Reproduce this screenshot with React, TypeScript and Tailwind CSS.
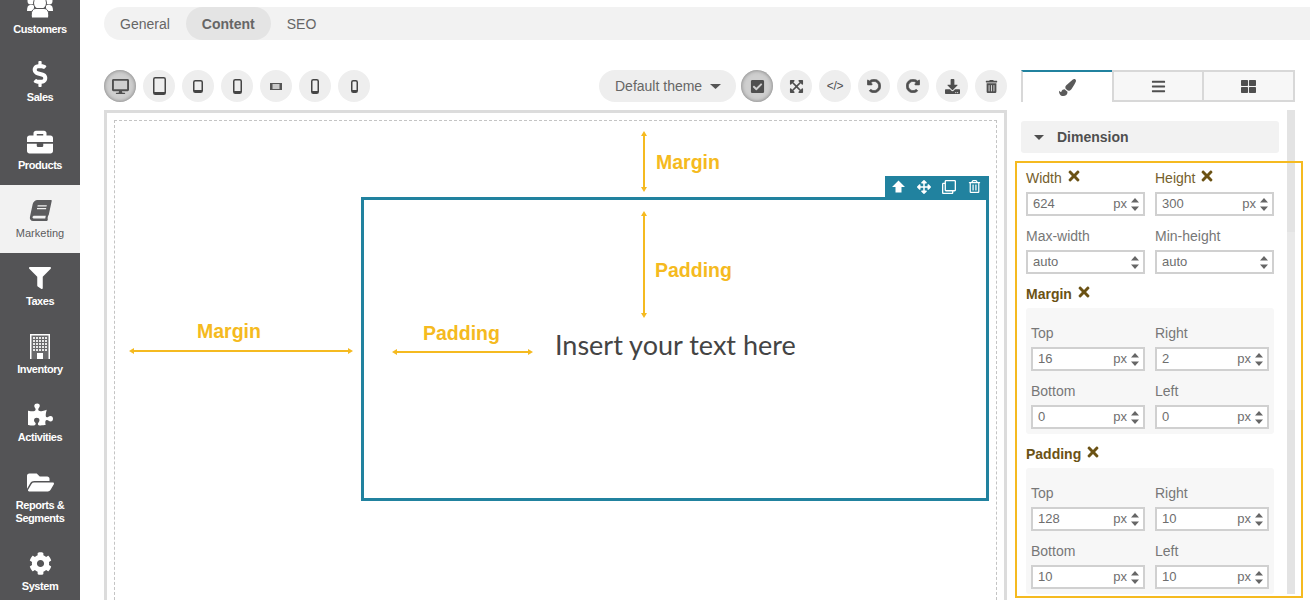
import type { ReactNode } from "react";
import {
    FaArrowsAlt,
    FaBars,
    FaBook,
    FaBriefcase,
    FaCheckSquare,
    FaCog,
    FaDesktop,
    FaDollarSign,
    FaDownload,
    FaExpandArrowsAlt,
    FaFilter,
    FaFolderOpen,
    FaPaintBrush,
    FaPuzzlePiece,
    FaRedoAlt,
    FaRegClone,
    FaRegTrashAlt,
    FaThLarge,
    FaTimes,
    FaTrashAlt,
    FaUndoAlt,
} from "react-icons/fa";

const UsersIcon = () => (
    <svg width="26" height="28" viewBox="0 0 26 28" fill="currentColor">
        <circle cx="4" cy="9" r="3.5" />
        <circle cx="22" cy="9" r="3.5" />
        <path d="M0 19c0-4 1-6 3-6h4v6zM26 19c0-4-1-6-3-6h-4v6z" />
        <circle cx="13" cy="11" r="6.5" stroke="#545456" strokeWidth="1" />
        <path d="M4.500 26c-1-6 1-9.500 4.500-9.500h8c3.500 0 5.500 3.500 4.500 9.500z" stroke="#545456" strokeWidth="1" />
    </svg>
);

const BuildingIcon = () => (
    <svg width="20" height="25" viewBox="0 0 20 25">
        <rect x="0" y="0" width="20" height="25" fill="#ffffff" />
        <rect x="1.500" y="1.500" width="17" height="23.500" fill="#6a6a6c" />
        {[3, 6, 9, 12, 15].map((x) =>
            [3, 6, 9, 12, 15].map((y) => (
                <rect key={`${x}-${y}`} x={x} y={y} width="2" height="2" fill="#e8e8e8" />
            )),
        )}
        <rect x="7" y="19" width="6" height="6" fill="#ffffff" />
    </svg>
);

const navItems = [
    { label: "Customers", icon: <UsersIcon /> },
    { label: "Sales", icon: <FaDollarSign size={26} /> },
    { label: "Products", icon: <FaBriefcase size={26} /> },
    { label: "Marketing", icon: <FaBook size={21} className="-skew-x-12" />, active: true },
    { label: "Taxes", icon: <FaFilter size={22} /> },
    { label: "Inventory", icon: <BuildingIcon /> },
    { label: "Activities", icon: <FaPuzzlePiece size={25} /> },
    { label: "Reports &\nSegments", icon: <FaFolderOpen size={27} /> },
    { label: "System", icon: <FaCog size={23} /> },
];

const Sidebar = () => (
    <aside className="w-20 shrink-0 bg-[#545456] -mt-[19px]">
        {navItems.map((item) => (
            <div
                key={item.label}
                className={`flex flex-col items-center pt-[11px] ${item.label.includes("\n") ? "h-[81px]" : "h-[68px]"} ${item.active ? "bg-[#f2f2f2] text-[#5c5c5e]" : "text-white"}`}
            >
                <div className="h-[28px] flex items-center justify-center">{item.icon}</div>
                <div className={`mt-[3px] text-[11px] leading-[13px] text-center whitespace-pre-line ${item.active ? "font-normal" : "font-bold tracking-[-0.45px]"}`}>
                    {item.label}
                </div>
            </div>
        ))}
    </aside>
);

const RoundBtn = ({ children, pressed }: { children: ReactNode; pressed?: boolean }) => (
    <div
        className={`w-8 h-8 rounded-full flex items-center justify-center text-[#4f4f4f] ${pressed ? "bg-[#cfcfcf] shadow-[inset_0_0_4px_#777]" : "bg-[#eeeeee]"}`}
    >
        {children}
    </div>
);

// tablet / phone outline, bottom bar is the home button
const Device = ({ w, h, landscape }: { w: number; h: number; landscape?: boolean }) => (
    <svg width={w} height={h} viewBox={`0 0 ${w} ${h}`} fill="none">
        {landscape ? (
            <>
                <rect x="0.500" y="0.500" width={w - 1} height={h - 1} fill="#c8c8c8" stroke="#555555" strokeWidth="1" />
                <rect x="1" y="1" width="1.500" height={h - 2} fill="#555555" />
                <rect x={w - 2.500} y="1" width="1.500" height={h - 2} fill="#555555" />
            </>
        ) : (
            <>
                <rect x="0.750" y="0.750" width={w - 1.500} height={h - 1.500} rx="1.500" stroke="#454545" strokeWidth="1.500" />
                <rect x="1" y={h - 3} width={w - 2} height="2" fill="#454545" />
            </>
        )}
    </svg>
);

const Caret = ({ w = 11, h = 5, className }: { w?: number; h?: number; className?: string }) => (
    <svg width={w} height={h} viewBox={`0 0 ${w} ${h}`} className={className} fill="currentColor">
        <path d={`M0 0H${w}L${w / 2} ${h}Z`} />
    </svg>
);

const SortIcon = () => (
    <svg width="8" height="13" viewBox="0 0 8 13" fill="#666666" className="shrink-0">
        <path d="M4 0L8 4.500H0Z M4 13L8 8.500H0Z" />
    </svg>
);

const UpIcon = () => (
    <svg width="13" height="13" viewBox="0 0 13 13" fill="currentColor">
        <path d="M6.500 0.500L13 7H9.500V12.500H3.500V7H0Z" />
    </svg>
);

const Arrow = ({ x, y, len, vertical }: { x: number; y: number; len: number; vertical?: boolean }) => (
    <svg
        className="absolute"
        style={vertical ? { left: x - 4, top: y, width: 8, height: len } : { left: x, top: y - 4, width: len, height: 8 }}
        viewBox={vertical ? `0 0 8 ${len}` : `0 0 ${len} 8`}
    >
        {vertical ? (
            <>
                <rect x="3" y="3" width="2" height={len - 6} fill="#f5ba20" />
                <path d={`M4 0L7 5H1Z M4 ${len}L7 ${len - 5}H1Z`} fill="#f5ba20" />
            </>
        ) : (
            <>
                <rect x="3" y="3" width={len - 6} height="2" fill="#f5ba20" />
                <path d={`M0 4L5 1V7Z M${len} 4L${len - 5} 1V7Z`} fill="#f5ba20" />
            </>
        )}
    </svg>
);

const Note = ({ x, y, children }: { x: number; y: number; children: ReactNode }) => (
    <div className="absolute text-[19.5px] leading-6 font-bold text-[#f5ba20]" style={{ left: x, top: y }}>
        {children}
    </div>
);

const Canvas = () => (
    <div className="relative flex-1 border-[3px] border-b-0 border-[#dcdcdc] pt-[7px] px-[7px] overflow-hidden">
        <div className="h-full border border-b-0 border-dashed border-[#c4c4c4] flex justify-end pr-[7px]">
            <div className="mt-[55px] w-[628px] h-[325px] flex flex-col items-end">
                <div className="w-[104px] h-[21px] bg-[#21829f] text-white flex items-center justify-between pl-[7px] pr-[8px] shrink-0">
                    <UpIcon />
                    <FaArrowsAlt size={14} />
                    <FaRegClone size={14} />
                    <FaRegTrashAlt size={13} />
                </div>
                <div className="w-full h-[304px] border-[3px] border-[#21829f] pl-[191px] pt-[127px]">
                    <div className="font-['Lato',sans-serif] text-[27px] leading-[36px] text-[#444444]">
                        Insert your text here
                    </div>
                </div>
            </div>
        </div>
        {/* annotations, offsets are from the frame's inner corner */}
        <Arrow x={537} y={18} len={61} vertical />
        <Arrow x={537} y={98} len={107} vertical />
        <Arrow x={22} y={238} len={224} />
        <Arrow x={285} y={239} len={141} />
        <Note x={549} y={37}>Margin</Note>
        <Note x={548} y={145}>Padding</Note>
        <Note x={90} y={206}>Margin</Note>
        <Note x={316} y={208}>Padding</Note>
    </div>
);

const Input = ({ value, unit }: { value: string; unit?: boolean }) => (
    <div className="h-6 border-2 border-[#d0d0d0] bg-white flex items-center text-[13px] text-[#6e6e6e] pr-[4px]">
        <span className="flex-1 pl-[5px]">{value}</span>
        {unit && <span className="mr-[4px]">px</span>}
        <SortIcon />
    </div>
);

const Field = ({ label, value, unit, changed }: { label: string; value: string; unit?: boolean; changed?: boolean }) => (
    <div>
        <div className={`h-5 mb-1 text-sm leading-5 flex items-center gap-[4px] ${changed ? "text-[#75602c]" : "text-[#777777]"}`}>
            {label}
            {changed && <FaTimes size={16} className="text-[#6b5214] -mt-[4px]" />}
        </div>
        <Input value={value} unit={unit} />
    </div>
);

const Heading = ({ children }: { children: ReactNode }) => (
    <div className="h-5 mt-[10px] mb-1 text-sm leading-5 font-bold text-[#6b5214] flex items-center gap-[4px]">
        {children}
        <FaTimes size={16} className="-mt-[4px]" />
    </div>
);

const Box = ({ values }: { values: string[] }) => (
    <div className="bg-[#f7f7f7] rounded-[3px] pt-[15px] pb-[5px] px-[5px] grid grid-cols-2 gap-x-[10px] gap-y-[10px]">
        <Field label="Top" value={values[0]} unit />
        <Field label="Right" value={values[1]} unit />
        <Field label="Bottom" value={values[2]} unit />
        <Field label="Left" value={values[3]} unit />
    </div>
);

const StylePanel = () => (
    <div className="w-[274px] flex flex-col shrink-0 ml-[14px]">
        <div className="flex h-8 -mt-[40px]">
            <div className="w-[91px] border-t-2 border-t-[#21829f] border-l-2 border-l-[#d8d8d8] flex items-center justify-center text-[#5a5a5a]">
                <FaPaintBrush size={17} />
            </div>
            <div className="w-[92px] border-2 border-[#d8d8d8] bg-[#f7f7f7] flex items-center justify-center text-[#4f4f4f]">
                <FaBars size={15} />
            </div>
            <div className="w-[91px] border-2 border-l-0 border-[#d8d8d8] bg-[#f7f7f7] flex items-center justify-center text-[#4f4f4f]">
                <FaThLarge size={15} />
            </div>
        </div>
        <div className="flex flex-1 mt-2 min-h-0">
            <div className="w-[258px] pt-[11px] shrink-0">
                <div className="h-8 bg-[#f2f2f2] rounded-[3px] flex items-center pl-[13px] gap-[13px] text-sm font-bold text-[#4f4f4f]">
                    <Caret w={10} h={5} />
                    Dimension
                </div>
                <div className="w-[248px] ml-[5px] mt-[15px]">
                    <div className="grid grid-cols-2 gap-x-[10px] gap-y-[10px]">
                        <Field label="Width" value="624" unit changed />
                        <Field label="Height" value="300" unit changed />
                        <Field label="Max-width" value="auto" />
                        <Field label="Min-height" value="auto" />
                    </div>
                    <Heading>Margin</Heading>
                    <Box values={["16", "2", "0", "0"]} />
                    <Heading>Padding</Heading>
                    <Box values={["128", "10", "10", "10"]} />
                </div>
            </div>
            <div className="ml-2 w-2 bg-[#e3e3e3] pt-[122px]">
                <div className="h-[178px] bg-[#e9e9e9]" />
            </div>
        </div>
    </div>
);

export default function App() {
    return (
        <div className="relative h-[600px] w-[1310px] flex overflow-hidden bg-white font-['Liberation_Sans',Arial,sans-serif]">
            <Sidebar />
            <main className="flex-1 flex flex-col pl-6 min-w-0">
                <div className="mt-[7px] h-[33px] bg-[#f2f2f2] rounded-l-[17px] flex items-center text-sm text-[#666666] shrink-0">
                    <span className="px-4">General</span>
                    <span className="h-full px-4 rounded-full bg-[#e4e4e4] font-bold flex items-center">Content</span>
                    <span className="px-4">SEO</span>
                </div>
                <div className="flex-1 flex mt-[30px] min-h-0">
                    <div className="w-[903px] flex flex-col shrink-0">
                        <div className="flex h-8 shrink-0 items-center">
                            <div className="flex gap-[7px]">
                                <RoundBtn pressed><FaDesktop size={17} /></RoundBtn>
                                <RoundBtn><Device w={13} h={18} /></RoundBtn>
                                <RoundBtn><Device w={10} h={13} /></RoundBtn>
                                <RoundBtn><Device w={9} h={15} /></RoundBtn>
                                <RoundBtn><Device w={12} h={7} landscape /></RoundBtn>
                                <RoundBtn><Device w={8} h={15} /></RoundBtn>
                                <RoundBtn><Device w={7} h={13} /></RoundBtn>
                            </div>
                            <div className="ml-auto flex gap-[7px]">
                                <div className="w-[137px] h-8 -mr-[2px] rounded-full bg-[#eeeeee] flex items-center pl-4 gap-[8px] text-sm text-[#666666]">
                                    Default theme
                                    <Caret className="text-[#555555]" />
                                </div>
                                <RoundBtn pressed><FaCheckSquare size={15} /></RoundBtn>
                                <RoundBtn><FaExpandArrowsAlt size={15} /></RoundBtn>
                                <RoundBtn><span className="text-[12px] tracking-[-0.3px]">&lt;/&gt;</span></RoundBtn>
                                <RoundBtn><FaUndoAlt size={14} stroke="currentColor" strokeWidth={24} /></RoundBtn>
                                <RoundBtn><FaRedoAlt size={14} stroke="currentColor" strokeWidth={24} /></RoundBtn>
                                <RoundBtn><FaDownload size={15} /></RoundBtn>
                                <RoundBtn><FaTrashAlt size={13} /></RoundBtn>
                            </div>
                        </div>
                        <div className="mt-2 flex-1 flex min-h-0">
                            <Canvas />
                        </div>
                    </div>
                    <div className="flex flex-col mt-[40px]">
                        <StylePanel />
                    </div>
                </div>
            </main>
            {/* highlight frame over the form */}
            <div className="absolute left-[1015px] top-[161px] w-[288px] h-[437px] border-2 border-[#f5ba20] pointer-events-none" />
        </div>
    );
}
